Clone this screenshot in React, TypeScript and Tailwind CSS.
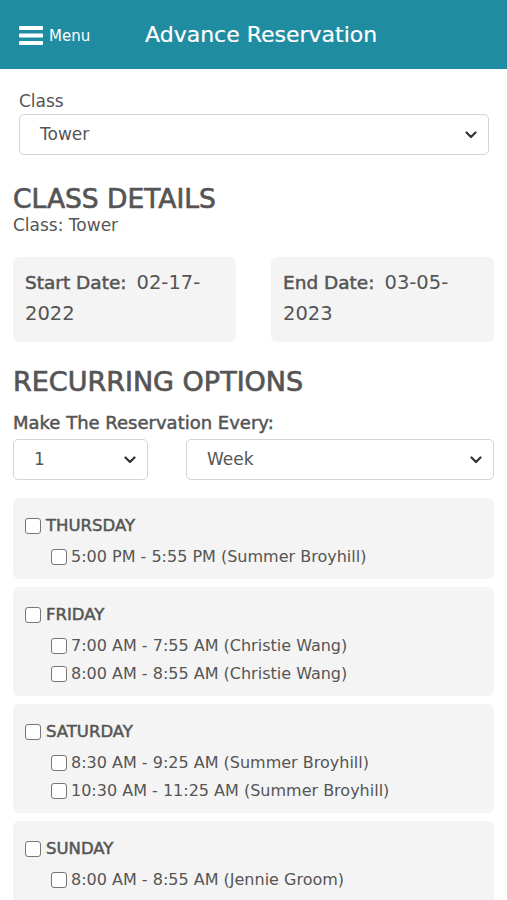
import React from "react";

const font = { fontFamily: '"DejaVu Sans", "Open Sans", sans-serif' };

function Chevron() {
  return (
    <svg width="12" height="8" viewBox="0 0 12 8" className="shrink-0">
      <path d="M1.5 1.5 L6 6 L10.5 1.5" fill="none" stroke="#333" strokeWidth="2.2" strokeLinecap="round" strokeLinejoin="round" />
    </svg>
  );
}

function Box() {
  return <span className="inline-block w-[16px] h-[16px] rounded-[3px] border-[1.5px] border-[#767676] bg-white shrink-0" />;
}

function Select({ value, className, padL }: { value: string; className: string; padL: string }) {
  return (
    <div className={`flex items-center justify-between h-[41px] rounded-[5px] border border-[#d4d4d4] bg-white pr-[11px] ${padL} ${className}`}>
      <span className="text-[17px] text-[#555]">{value}</span>
      <Chevron />
    </div>
  );
}

const days = [
  { name: "THURSDAY", slots: ["5:00 PM - 5:55 PM (Summer Broyhill)"] },
  { name: "FRIDAY", slots: ["7:00 AM - 7:55 AM (Christie Wang)", "8:00 AM - 8:55 AM (Christie Wang)"] },
  { name: "SATURDAY", slots: ["8:30 AM - 9:25 AM (Summer Broyhill)", "10:30 AM - 11:25 AM (Summer Broyhill)"] },
  { name: "SUNDAY", slots: ["8:00 AM - 8:55 AM (Jennie Groom)", "9:00 AM - 9:55 AM (Jennie Groom)"] },
];

function DateBox({ label, first, second }: { label: string; first: string; second: string }) {
  return (
    <div className="w-[223px] h-[85px] bg-[#f4f4f4] rounded-[6px] px-[12px] pt-[10px] leading-[31px] flex flex-col">
      <div className="flex items-baseline">
        <span className="text-[18.5px] [-webkit-text-stroke:0.5px_#555]">{label}</span>
        <span className="text-[19.5px] ml-[10px]">{first}</span>
      </div>
      <span className="text-[19.5px]">{second}</span>
    </div>
  );
}

export default function App() {
  return (
    <div style={font} className="w-[507px] h-[900px] overflow-hidden bg-white text-[#555]">
      <header className="h-[69px] bg-[#1f8ca1] flex items-center text-white">
        <div className="flex items-center pl-[19px] w-[145px]">
          <svg width="24" height="20" viewBox="0 0 24 20">
            <rect x="0" y="1" width="24" height="4" rx="1" fill="white" />
            <rect x="0" y="8.5" width="24" height="4" rx="1" fill="white" />
            <rect x="0" y="16" width="24" height="4" rx="1" fill="white" />
          </svg>
          <span className="ml-[6px] text-[15px] mt-[4px]">Menu</span>
        </div>
        <span className="text-[22px] [-webkit-text-stroke:0.2px_white]">Advance Reservation</span>
      </header>

      <div className="px-[19px] pt-[22px]">
        <div className="text-[17px] leading-[20px]">Class</div>
        <Select value="Tower" className="mt-[3px] w-[470px]" padL="pl-[20px]" />
      </div>

      <div className="px-[13px]">
        <h2 className="mt-[29px] text-[26.5px] leading-[30px] [-webkit-text-stroke:0.7px_#555]">CLASS DETAILS</h2>
        <div className="text-[17px] leading-[20px] mt-[1px]">Class: Tower</div>

        <div className="mt-[22px] flex justify-between">
          <DateBox label="Start Date:" first="02-17-" second="2022" />
          <DateBox label="End Date:" first="03-05-" second="2023" />
        </div>

        <h2 className="mt-[25px] text-[27px] leading-[30px] [-webkit-text-stroke:0.7px_#555]">RECURRING OPTIONS</h2>
        <div className="mt-[16px] text-[18px] leading-[20px] [-webkit-text-stroke:0.5px_#555]">Make The Reservation Every:</div>
        <div className="mt-[6px] flex justify-between">
          <Select value="1" className="w-[135px]" padL="pl-[20px]" />
          <Select value="Week" className="w-[308px]" padL="pl-[20px]" />
        </div>

        <div className="mt-[18px] flex flex-col gap-[8px]">
          {days.map((d) => (
            <div key={d.name} className="bg-[#f4f4f4] rounded-[6px] pl-[12px] pt-[17px] pb-[8px]">
              <div className="flex items-center gap-[5px] h-[22px]">
                <Box />
                <span className="text-[16.5px] [-webkit-text-stroke:0.5px_#555]">{d.name}</span>
              </div>
              <div className="mt-[6px] pl-[26px] flex flex-col">
                {d.slots.map((s) => (
                  <div key={s} className="flex items-center gap-[4px] h-[28px]">
                    <Box />
                    <span className="text-[16px]">{s}</span>
                  </div>
                ))}
              </div>
            </div>
          ))}
        </div>
      </div>
    </div>
  );
}
